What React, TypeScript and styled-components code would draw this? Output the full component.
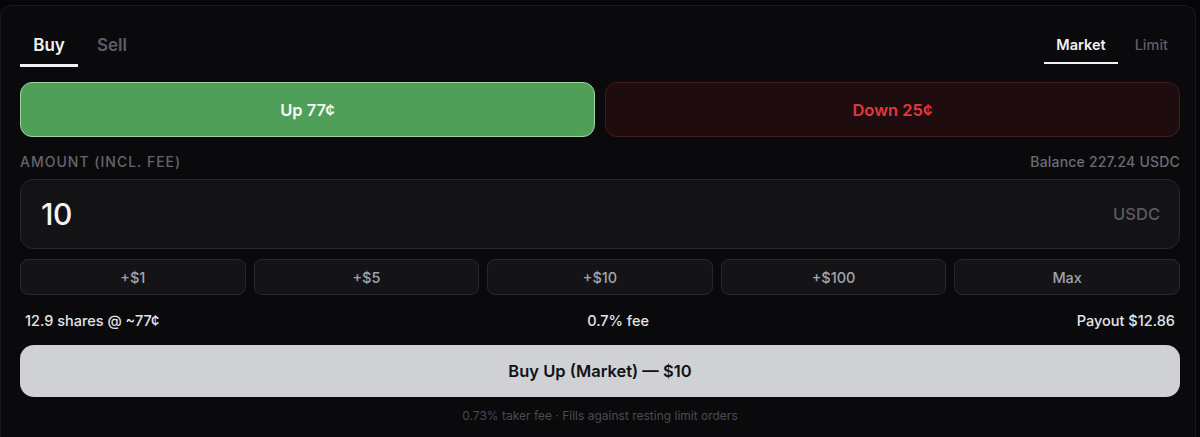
import React from "react";
import styled, { createGlobalStyle } from "styled-components";

const quickAmounts = ["+$1", "+$5", "+$10", "+$100", "Max"];

export default function App() {
  return (
    <>
      <GlobalStyle />
      <Card>
        <TabsRow>
          <TabGroup>
            <SideTab $active>Buy</SideTab>
            <SideTab>Sell</SideTab>
          </TabGroup>
          <TabGroup>
            <TypeTab $active>Market</TypeTab>
            <TypeTab>Limit</TypeTab>
          </TabGroup>
        </TabsRow>

        <OutcomeRow>
          <OutcomeButton $kind="up">Up 77¢</OutcomeButton>
          <OutcomeButton $kind="down">Down 25¢</OutcomeButton>
        </OutcomeRow>

        <LabelRow>
          <FieldLabel>Amount (incl. fee)</FieldLabel>
          <Balance>Balance 227.24 USDC</Balance>
        </LabelRow>

        <AmountBox>
          <AmountValue>10</AmountValue>
          <Currency>USDC</Currency>
        </AmountBox>

        <QuickRow>
          {quickAmounts.map((q) => (
            <QuickButton key={q}>{q}</QuickButton>
          ))}
        </QuickRow>

        <InfoRow>
          <span>12.9 shares @ ~77¢</span>
          <span>0.7% fee</span>
          <span>Payout $12.86</span>
        </InfoRow>

        <SubmitButton>Buy Up (Market) — $10</SubmitButton>

        <Footnote>0.73% taker fee · Fills against resting limit orders</Footnote>
      </Card>
    </>
  );
}

//*Styles

const GlobalStyle = createGlobalStyle`
  html, body {
    margin: 0;
    padding: 0;
    background: #060608;
    font-family: Inter, "Noto Sans", sans-serif;
    -webkit-font-smoothing: antialiased;
  }
  body {
    height: 437px;
    overflow: hidden;
  }
`;

const Card = styled.div`
  margin: 5px 4px 0 0;
  height: 432px;
  box-sizing: border-box;
  padding: 29px 15px 0 19px;
  background: #0a0a0c;
  border: 1px solid #1b1b1f;
  border-bottom: none;
  border-radius: 12px 12px 0 0;
`;

const TabsRow = styled.div`
  display: flex;
  justify-content: space-between;
  align-items: flex-start;
`;

const TabGroup = styled.div`
  display: flex;
  gap: 5px;
`;

const SideTab = styled.div<{ $active?: boolean }>`
  width: 58px;
  text-align: center;
  font-size: 17px;
  line-height: 20px;
  font-weight: 600;
  padding-bottom: 9px;
  color: ${(p) => (p.$active ? "#f2f2f4" : "#5d5d66")};
  border-bottom: 3px solid ${(p) => (p.$active ? "#f2f2f4" : "transparent")};
`;

const TypeTab = styled.div<{ $active?: boolean }>`
  padding: 0 12px 7px;
  font-size: 14.5px;
  line-height: 20px;
  font-weight: ${(p) => (p.$active ? 600 : 500)};
  color: ${(p) => (p.$active ? "#f2f2f4" : "#5d5d66")};
  border-bottom: 2px solid ${(p) => (p.$active ? "#f2f2f4" : "transparent")};
`;

const OutcomeRow = styled.div`
  display: flex;
  gap: 10px;
  margin-top: 15px;
`;

const OutcomeButton = styled.div<{ $kind: "up" | "down" }>`
  flex: 1;
  height: 55px;
  box-sizing: border-box;
  display: flex;
  align-items: center;
  justify-content: center;
  border-radius: 12px;
  font-size: 16.5px;
  font-weight: 600;
  background: ${(p) => (p.$kind === "up" ? "#4f9f59" : "#1f0c0e")};
  border: 1px solid ${(p) => (p.$kind === "up" ? "#9fd3a2" : "#47191c")};
  color: ${(p) => (p.$kind === "up" ? "#f4fbf4" : "#e1383d")};
`;

const LabelRow = styled.div`
  display: flex;
  justify-content: space-between;
  align-items: center;
  margin-top: 16px;
  line-height: 18px;
`;

const FieldLabel = styled.span`
  font-size: 14px;
  font-weight: 500;
  text-transform: uppercase;
  letter-spacing: 1px;
  color: #64646d;
`;

const Balance = styled.span`
  font-size: 14px;
  font-weight: 500;
  letter-spacing: 0.2px;
  color: #6c6c75;
`;

const AmountBox = styled.div`
  margin-top: 8px;
  height: 70px;
  box-sizing: border-box;
  display: flex;
  align-items: center;
  justify-content: space-between;
  padding: 0 19px 0 20px;
  background: #131315;
  border: 1px solid #27272b;
  border-radius: 13px;
`;

const AmountValue = styled.span`
  font-size: 30px;
  font-weight: 500;
  letter-spacing: -0.5px;
  color: #f4f4f6;
`;

const Currency = styled.span`
  font-size: 16.5px;
  font-weight: 500;
  color: #5a5a63;
`;

const QuickRow = styled.div`
  display: flex;
  gap: 8px;
  margin-top: 10px;
`;

const QuickButton = styled.div`
  flex: 1;
  height: 36px;
  box-sizing: border-box;
  display: flex;
  align-items: center;
  justify-content: center;
  font-size: 14.5px;
  font-weight: 500;
  color: #a3a3ab;
  background: #141416;
  border: 1px solid #28282c;
  border-radius: 8px;
`;

const InfoRow = styled.div`
  display: flex;
  justify-content: space-between;
  padding: 0 5px;
  margin-top: 16px;
  font-size: 14.5px;
  line-height: 20px;
  font-weight: 500;
  color: #e4e4e7;
`;

const SubmitButton = styled.div`
  margin-top: 14px;
  height: 52px;
  display: flex;
  align-items: center;
  justify-content: center;
  background: #d0d1d5;
  border-radius: 14px;
  color: #111114;
  font-size: 16.5px;
  font-weight: 600;
`;

const Footnote = styled.div`
  margin-top: 11px;
  text-align: center;
  font-size: 12px;
  line-height: 16px;
  color: #4a4a51;
`;
